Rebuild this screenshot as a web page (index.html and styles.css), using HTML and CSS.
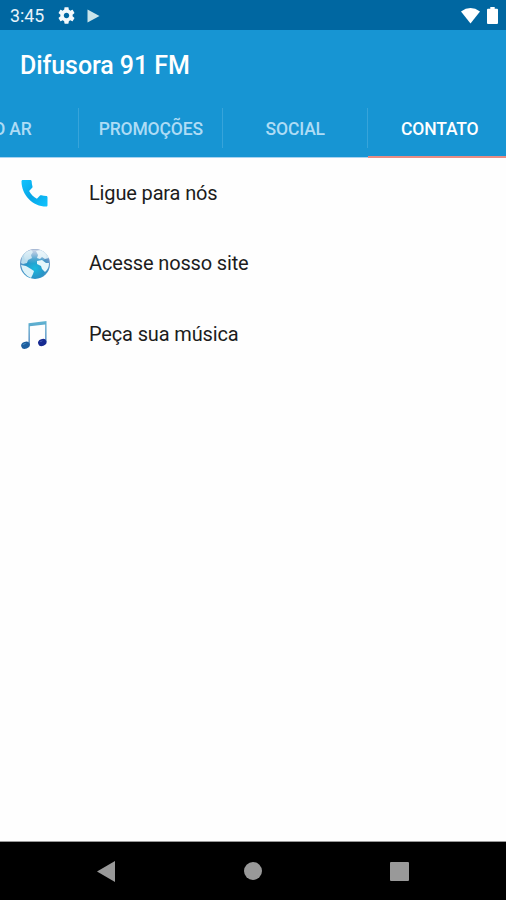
FILE: index.html
```html
<!DOCTYPE html>
<html lang="pt-BR">
<head>
    <meta charset="UTF-8">
    <meta name="viewport" content="width=device-width, initial-scale=1.0">
    <title>Difusora 91 FM</title>
    <link rel="stylesheet" href="styles.css">
</head>
<body>
    <div class="app">
        <div class="status-bar">
            <span class="clock">3:45</span>
            <svg class="gear" viewBox="2 2 20 20" width="17" height="17">
                <path fill="#f4f9fc" d="M19.14 12.94c.04-.3.06-.61.06-.94 0-.32-.02-.64-.07-.94l2.03-1.58c.18-.14.23-.41.12-.61l-1.92-3.32c-.12-.22-.37-.29-.59-.22l-2.39.96c-.5-.38-1.03-.7-1.62-.94l-.36-2.54c-.04-.24-.24-.41-.48-.41h-3.84c-.24 0-.43.17-.47.41l-.36 2.54c-.59.24-1.13.57-1.62.94l-2.39-.96c-.22-.08-.47 0-.59.22L2.74 8.87c-.12.21-.08.47.12.61l2.03 1.58c-.05.3-.09.63-.09.94s.02.64.07.94l-2.03 1.58c-.18.14-.23.41-.12.61l1.92 3.32c.12.22.37.29.59.22l2.39-.96c.5.38 1.03.7 1.62.94l.36 2.54c.05.24.24.41.48.41h3.84c.24 0 .44-.17.47-.41l.36-2.54c.59-.24 1.13-.56 1.62-.94l2.39.96c.22.08.47 0 .59-.22l1.92-3.32c.12-.22.07-.47-.12-.61l-2.01-1.58zM12 15.2c-1.77 0-3.2-1.43-3.2-3.2s1.43-3.2 3.2-3.2 3.2 1.43 3.2 3.2-1.43 3.2-3.2 3.2z"/>
            </svg>
            <svg class="play" viewBox="0 0 13 14" width="13" height="14">
                <path fill="#c9e4ea" d="M.5.5L12.5 7 .5 13.5z"/>
            </svg>
            <svg class="wifi" viewBox="0 0 19 16" width="19" height="16">
                <path fill="#fff" d="M0 3.400Q9.500-3.200 19 3.400L9.500 15.500z"/>
            </svg>
            <svg class="battery" viewBox="0 0 11 17" width="11" height="17">
                <path fill="#fff" d="M3.300 0h4.400v1.800H10q1 0 1 1V16q0 1-1 1H1q-1 0-1-1V2.800q0-1 1-1h2.300z"/>
            </svg>
        </div>
        <div class="toolbar">
            <h1>Difusora 91 FM</h1>
        </div>
        <div class="tabs">
            <div class="tab"><span>NO AR</span></div>
            <div class="tab"><span>PROMOÇÕES</span></div>
            <div class="tab"><span>SOCIAL</span></div>
            <div class="tab active"><span>CONTATO</span></div>
        </div>
        <div class="list">
            <div class="item">
                <svg class="icon" viewBox="0 0 32 32" width="32" height="32">
                    <defs>
                        <linearGradient id="phone" x1="0" y1="0" x2="1" y2="1">
                            <stop offset="0" stop-color="#10c4ff"/>
                            <stop offset=".5" stop-color="#08a5e6"/>
                            <stop offset="1" stop-color="#10c4ff"/>
                        </linearGradient>
                    </defs>
                    <path fill="url(#phone)" d="M3.800 3H11.300c.8 0 1.400.6 1.400 1.400 0 1.800.3 3.400.8 5 .2.500 0 1-.3 1.400l-3.100 3.100c1.600 3.200 4.600 6.200 7.800 7.800l3.100-3.100c.4-.4.9-.5 1.400-.3 1.600.5 3.200.8 4.900.8.800 0 1.200.6 1.200 1.400v7.800c0 .8-.4 1.200-1.200 1.200C13.700 29.500 2.500 17.600 2.500 4.400 2.500 3.600 3 3 3.800 3z"/>
                </svg>
                <span class="label">Ligue para nós</span>
            </div>
            <div class="item">
                <svg class="icon" viewBox="0 0 32 32" width="32" height="32">
                    <defs>
                        <radialGradient id="sea" cx="50%" cy="65%" r="65%">
                            <stop offset="0" stop-color="#18bbe0"/>
                            <stop offset=".5" stop-color="#2a93c6"/>
                            <stop offset=".8" stop-color="#6496c6"/>
                            <stop offset="1" stop-color="#8a9fc4"/>
                        </radialGradient>
                        <linearGradient id="shine" x1="0" y1="0" x2="0" y2="1">
                            <stop offset="0" stop-color="#fff" stop-opacity=".6"/>
                            <stop offset="1" stop-color="#fff" stop-opacity="0"/>
                        </linearGradient>
                    </defs>
                    <circle cx="16" cy="16" r="15" fill="url(#sea)"/>
                    <!-- Americas -->
                    <path fill="#b9dced" d="M3 9Q6 3 12 2l2 2-2 3 1 3-4 2-1 3-4 1-2-1z"/>
                    <path fill="#ddf2f9" d="M2 17l5 1 5 3 3 2-1 3-2 4Q4 27 2 17z"/>
                    <!-- Europe and Africa -->
                    <path fill="#d6ebf5" d="M17 3l5-1q6 3 8 8l-4 1-3-2-2 2-3-1 1-3z"/>
                    <path fill="#e4f6fb" d="M18 13l5-1 4 3 3 0q0 6-4 9l-3-3-1-3-4-2z"/>
                    <ellipse cx="16" cy="8.500" rx="11" ry="7" fill="url(#shine)"/>
                </svg>
                <span class="label">Acesse nosso site</span>
            </div>
            <div class="item">
                <svg class="icon" viewBox="0 0 32 32" width="32" height="32">
                    <defs>
                        <linearGradient id="stem" x1="0" y1="0" x2="0" y2="1">
                            <stop offset="0" stop-color="#62b5d2"/>
                            <stop offset="1" stop-color="#3d78b8"/>
                        </linearGradient>
                    </defs>
                    <path fill="url(#stem)" d="M9.500 5.200L27.500 3V24H26.200V6.500L10.800 8.300V27H9.500z"/>
                    <ellipse cx="6.500" cy="27.200" rx="4.400" ry="3.400" fill="#1d5e9f" transform="rotate(-20 6.500 27.200)"/>
                    <ellipse cx="23.300" cy="24.500" rx="4.300" ry="3.400" fill="#172a91" transform="rotate(-20 23.300 24.500)"/>
                    <path fill="#4a92c5" d="M3.500 26.500q2-2 4-1.500l-3 2z"/>
                    <path fill="#4a62b8" d="M20.500 24q2-2 3.500-1.500l-2 1.500z"/>
                </svg>
                <span class="label">Peça sua música</span>
            </div>
        </div>
        <div class="nav-bar">
            <svg viewBox="0 0 18 21" width="18" height="21"><path fill="#999" d="M0 10.500L18 0v21z"/></svg>
            <svg viewBox="0 0 18 18" width="18" height="18"><circle cx="9" cy="9" r="9" fill="#999"/></svg>
            <svg viewBox="0 0 19 19" width="19" height="19"><rect width="19" height="19" rx="1" fill="#999"/></svg>
        </div>
    </div>
</body>
</html>
```

FILE: styles.css
```css
body {
    margin: 0;
    background-color: #fefefe;
    font-family: Roboto, "Liberation Sans", sans-serif;
}
.app {
    display: flex;
    flex-direction: column;
    height: 900px;
    overflow: hidden;
}
.status-bar {
    display: flex;
    align-items: center;
    box-sizing: border-box;
    height: 30px;
    padding: 1px 8px 0 10px;
    background-color: #0067a1;
    color: #e8f3fa;
}
.clock {
    width: 47px;
    font-size: 17.8px;
    line-height: 28px;
}
.gear {
    margin-left: 1px;
}
.play {
    margin-left: 12px;
}
.wifi {
    margin-left: auto;
}
.battery {
    margin-left: 7px;
}
.toolbar {
    height: 70px;
    padding-left: 20px;
    background-color: #1795d3;
}
h1 {
    margin: 0;
    color: #fff;
    font-size: 25px;
    font-weight: 500;
    letter-spacing: -0.08px;
    line-height: 72px;
}
.tabs {
    display: flex;
    box-sizing: border-box;
    height: 58px;
    margin-left: -66px;
    padding-top: 8px;
    background-color: #1795d3;
    border-bottom: 1px solid #a9d3f0;
}
.tab {
    display: flex;
    justify-content: center;
    flex: none;
    box-sizing: border-box;
    width: 144.5px;
    color: #aedcf5;
    font-size: 17.5px;
    font-weight: 500;
    letter-spacing: -0.15px;
    line-height: 42px;
    background: linear-gradient(#37a4da, #37a4da) right top / 1px 40px no-repeat;
}
.tab.active {
    height: 50px;
    color: #fff;
    background: none;
    border-bottom: 2px solid #e88d84;
}
.list {
    flex: 1;
}
.item {
    display: flex;
    align-items: center;
    height: 70.5px;
    padding-left: 19px;
}
.label {
    margin-left: 38px;
    padding-bottom: 1px;
    color: #1c1c1c;
    font-size: 20px;
    letter-spacing: -0.15px;
    line-height: 24px;
}
.nav-bar {
    display: flex;
    align-items: center;
    justify-content: space-between;
    box-sizing: border-box;
    height: 59px;
    padding: 0 97px;
    background-color: #000;
    border-top: 1px solid #999;
}
```
